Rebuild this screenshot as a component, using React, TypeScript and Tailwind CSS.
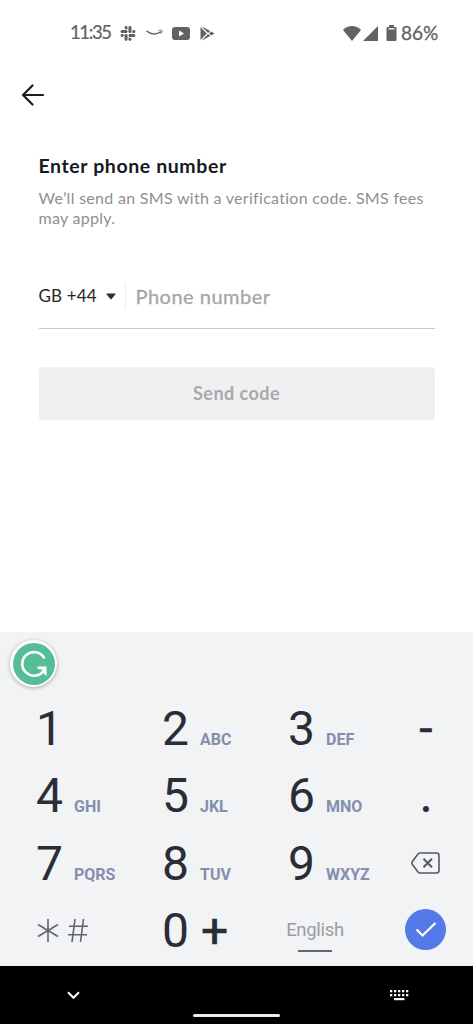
import React from "react";
import { FaSlack } from "react-icons/fa";

type Key = {
  digit: string;
  letters: string;
};

const keyRows: Key[][] = [
  [
    { digit: "1", letters: "" },
    { digit: "2", letters: "ABC" },
    { digit: "3", letters: "DEF" },
  ],
  [
    { digit: "4", letters: "GHI" },
    { digit: "5", letters: "JKL" },
    { digit: "6", letters: "MNO" },
  ],
  [
    { digit: "7", letters: "PQRS" },
    { digit: "8", letters: "TUV" },
    { digit: "9", letters: "WXYZ" },
  ],
];

const StatusBar = () => (
  <div className="flex h-[66px] items-center pl-[70px] pr-[34px] text-[#626262]">
    <span className="w-[49px] whitespace-nowrap font-['Lato',sans-serif] text-[18.5px] tracking-[-1.4px] [-webkit-text-stroke:0.2px]">11:35</span>
    <FaSlack className="ml-px h-[17px] w-[16px]" />
    <svg className="ml-[10px]" width="17" height="8" viewBox="0 0 17 8" fill="none">
      <path d="M1 2.2C5 5.6 10.500 5.800 14.500 3" stroke="currentColor" strokeWidth="1.500" strokeLinecap="round" />
      <path d="M12.500 1.600C14 1 15.600 1 16 1.500C16.300 2.200 15.700 3.700 14.800 4.800" stroke="currentColor" strokeWidth="0.900" />
    </svg>
    <svg className="ml-[9px]" width="18" height="13" viewBox="0 0 18 13">
      <rect width="18" height="13" rx="3" fill="currentColor" />
      <path d="M7 3.500V9.500L12 6.500Z" fill="white" />
    </svg>
    <svg className="ml-[10px]" width="15" height="15" viewBox="0 0 15 15" fill="currentColor">
      <path d="M.5 1L6.800 7.500L.5 14Z" />
      <path d="M1.500 .3L10.300 5L8 7Z" />
      <path d="M11.200 5.600L14.500 7.500L11.200 9.400L9 7.500Z" />
      <path d="M1.500 14.700L10.300 10L8 8Z" />
    </svg>
    <div className="ml-auto flex items-center">
      <svg width="18" height="15" viewBox="0 0 18 15" fill="currentColor">
        <path d="M9 15L0 4C2.500 1.400 5.500 0 9 0S15.500 1.400 18 4Z" />
      </svg>
      <svg className="ml-[2px]" width="15" height="15" viewBox="0 0 15 15" fill="currentColor">
        <path d="M15 0V15H0Z" />
      </svg>
      <svg className="ml-[8px]" width="11" height="16" viewBox="0 0 11 16" fill="currentColor">
        <path d="M3 0H8V2H9.500Q10.500 2 10.500 3V15Q10.500 16 9.500 16H1.500Q.5 16 .5 15V3Q.5 2 1.500 2H3Z" />
        <path d="M2.500 3.200H8.500V4.500H2.500Z" fill="white" />
      </svg>
      <span className="ml-[4px] w-[38px] whitespace-nowrap font-['Lato',sans-serif] text-[19px] [-webkit-text-stroke:0.3px]">86%</span>
    </div>
  </div>
);

const PhoneForm = () => (
  <main className="h-[509px] px-[38.5px] pt-[31px] font-['Lato',sans-serif]">
    <h1 className="text-[19.5px] font-bold leading-[24px] tracking-[0.6px] text-[#161823]">Enter phone number</h1>
    <p className="mt-[10px] whitespace-nowrap text-[16px] leading-[20px] tracking-[0.29px] text-[#8f8f8f]">
      We’ll send an SMS with a verification code. SMS fees
      <br />
      may apply.
    </p>

    <div className="mt-[49px] flex h-[52px] items-start border-b border-[#c8c8c8] pt-[6px]">
      <div className="flex h-[26px] w-[87px] items-center border-r border-[#ececec]">
        <span className="w-[67px] whitespace-nowrap text-[17px] tracking-[0.15px] text-[#252525]">GB +44</span>
        <svg width="10" height="7" viewBox="0 0 10 7" fill="#2d2d2d">
          <path d="M1 .5H9Q10 .5 9.300 1.400L5.600 6Q5 6.700 4.400 6L.7 1.400Q0 .5 1 .5Z" />
        </svg>
      </div>
      <input
        type="tel"
        placeholder="Phone number"
        className="ml-[10px] h-[26px] w-[280px] text-[20px] tracking-[0.5px] outline-none [-webkit-text-stroke:0.3px] placeholder:text-[#a6a6a6]"
      />
    </div>

    <button className="mt-[38px] block h-[53px] w-full rounded-[3px] bg-[#f0f0f2] text-[18px] font-bold tracking-[0.45px] text-[#a9a9ab]">
      Send code
    </button>
  </main>
);

const Keypad = () => (
  <section className="h-[334px] bg-[#f1f3f5] font-['Roboto',sans-serif] text-[#2b2d36]">
    <div className="h-[64px] pl-[10px] pt-[8px]">
      <div className="flex h-[47px] w-[47px] items-center justify-center rounded-full bg-white shadow-[0_1px_4px_rgba(0,0,0,0.3)]">
        <svg width="42" height="42" viewBox="0 0 42 42" fill="none">
          <circle cx="21" cy="21" r="21" fill="#57bd96" />
          <path d="M31 14.500A11.800 11.800 0 1 0 30.500 28" stroke="white" strokeWidth="2.600" strokeLinecap="round" />
          <path d="M24.500 23.500H33.500V33L31 31V27L24.500 26Z" fill="white" />
        </svg>
      </div>
    </div>

    {keyRows.map((row, i) => (
      <div key={i} className="flex h-[67.4px] pl-[36px]">
        {row.map((item) => (
          <div key={item.digit} className="flex w-[126px] items-baseline text-[48px] leading-[66px]">
            <span className="w-[38px]">{item.digit}</span>
            <span className="text-[16px] font-bold leading-none text-[#858ead]">{item.letters}</span>
          </div>
        ))}
        {/* Right side symbol keys */}
        <div className="flex w-[24px] justify-center text-[48px] leading-[67px]">
          {i === 0 && <span className="-mt-px font-normal [-webkit-text-stroke:0.5px]">-</span>}
          {i === 1 && <span className="-mt-[3px] font-['Lato',sans-serif]">.</span>}
          {i === 2 && (
            <svg className="-ml-[1px] mt-[21px] shrink-0" width="29" height="22" viewBox="0 0 29 22" fill="none" stroke="#565961" strokeWidth="1.600">
              <path d="M9 1H25.500Q28 1 28 3.500V18.500Q28 21 25.500 21H9Q7.800 21 7 20L1.400 12.500Q.5 11 1.400 9.500L7 2Q7.800 1 9 1Z" />
              <path d="M12.500 6.800L21 15.200M21 6.800L12.500 15.200" strokeWidth="2" />
            </svg>
          )}
        </div>
      </div>
    ))}

    <div className="flex h-[67px] pl-[36px]">
      <div className="w-[126px] pt-[20px]">
        <svg width="54" height="26" viewBox="0 0 54 26" fill="none" stroke="#60646c" strokeWidth="1.600">
          <path d="M12 1V24M2 6.500L22 18.500M22 6.500L2 18.500" />
          <path d="M39 1L36 24M47.500 1L44.500 24M33 8.300H52M32 16.800H51" />
        </svg>
      </div>
      <div className="flex w-[126px] text-[48px] leading-[66px]">
        <span className="w-[39px]">0</span>
        <span className="[-webkit-text-stroke:0.5px]">+</span>
      </div>
      <div className="flex w-[54px] flex-col items-center pt-[20px]">
        <span className="text-[18.5px] leading-[24px] tracking-[-0.3px] text-[#9a9da3]">English</span>
        <span className="mt-[8px] h-[2px] w-[34px] bg-[#63676e]" />
      </div>
      <div className="ml-[63px] mt-[11px] flex h-[41px] w-[41px] items-center justify-center rounded-full bg-[#5479e8]">
        <svg width="22" height="17" viewBox="0 0 22 17" fill="none">
          <path d="M1.500 8.500L7.500 14.500L20.500 2" stroke="white" strokeWidth="2.300" />
        </svg>
      </div>
    </div>
  </section>
);

const NavigationBar = () => (
  <footer className="flex h-[58px] bg-black pl-[67px] text-white">
    <svg className="mt-[25px]" width="13" height="9" viewBox="0 0 13 9" fill="none">
      <path d="M1 1.300L6.500 6.800L12 1.300" stroke="currentColor" strokeWidth="2" />
    </svg>
    <div className="ml-[113px] mt-[48px] h-[3px] w-[87px] rounded-full bg-[#eeeeee]" />
    <svg className="ml-[109px] mt-[23px]" width="20" height="12" viewBox="0 0 20 12" fill="currentColor">
      {[0, 4, 8, 12, 16].map((x) => (
        <React.Fragment key={x}>
          <rect x={x + 1} y="1" width="2.300" height="2.300" />
          <rect x={x + 1} y="5" width="2.300" height="2.300" />
        </React.Fragment>
      ))}
      <rect x="5" y="9" width="10.500" height="2.200" />
    </svg>
  </footer>
);

export default function App() {
  return (
    <div className="flex h-[1024px] w-[473px] flex-col overflow-hidden bg-white">
      <StatusBar />
      <header className="h-[57px] pl-[21px] pt-[18px]">
        <svg width="24" height="22" viewBox="0 0 24 22" fill="none">
          <path d="M11.500 1.500L2 11L11.500 20.500M2 11H22" stroke="#1b1c24" strokeWidth="2.200" strokeLinecap="round" strokeLinejoin="round" />
        </svg>
      </header>
      <PhoneForm />
      <Keypad />
      <NavigationBar />
    </div>
  );
}
